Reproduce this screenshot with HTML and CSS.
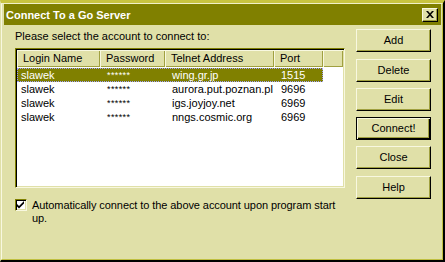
FILE: index.html
```html
<!DOCTYPE html>
<html>
<head>
<meta charset="utf-8">
<link rel="stylesheet" href="styles.css">
</head>
<body>
<div class="window">
  <div class="frame">
    <div class="titlebar">
      <span class="title">Connect To a Go Server</span>
      <span class="close"><svg width="8" height="7" viewBox="0 0 8 7"><path d="M0 0h2l2 2.2L6 0h2L5 3.5 8 7H6L4 4.8 2 7H0l3-3.5z" fill="#000"/></svg></span>
    </div>
    <div class="body">
      <div class="main">
        <div class="prompt">Please select the account to connect to:</div>
        <div class="list">
          <div class="header">
            <div class="hcell">Login Name</div>
            <div class="hcell">Password</div>
            <div class="hcell">Telnet Address</div>
            <div class="hcell">Port</div>
            <div class="hcell"></div>
          </div>
          <div class="rows">
            <div class="row selected"><span class="c1">slawek</span><span class="pw">******</span><span class="cell">wing.gr.jp</span><span class="cell">1515</span></div>
            <div class="row"><span class="c1">slawek</span><span class="pw">******</span><span class="cell">aurora.put.poznan.pl</span><span class="cell">9696</span></div>
            <div class="row"><span class="c1">slawek</span><span class="pw">******</span><span class="cell">igs.joyjoy.net</span><span class="cell">6969</span></div>
            <div class="row"><span class="c1">slawek</span><span class="pw">******</span><span class="cell">nngs.cosmic.org</span><span class="cell">6969</span></div>
          </div>
        </div>
        <div class="auto">
          <span class="checkbox"><svg width="8" height="8" viewBox="0 0 8 8"><path d="M0 3l2 2 5-5v2.5l-5 5-2-2z" fill="#000"/></svg></span>
          <span class="auto-text">Automatically connect to the above account upon program start<br>up.</span>
        </div>
      </div>
      <div class="buttons">
        <div class="btn b-add">Add</div>
        <div class="btn b-next">Delete</div>
        <div class="btn b-next">Edit</div>
        <div class="btn b-next default">Connect!</div>
        <div class="btn b-next">Close</div>
        <div class="btn b-last">Help</div>
      </div>
    </div>
  </div>
</div>
</body>
</html>
```
FILE: styles.css
```css
html, body {
  margin: 0;
  padding: 0;
  background: #e0e0a8;
}
body {
  font-family: "Liberation Sans", Arial, sans-serif;
  font-size: 11px;
  color: #000;
}
.window {
  width: 445px;
  height: 262px;
  box-sizing: border-box;
  border-style: solid;
  border-width: 3px 2px 2px 1px;
  border-color: #c8c440 #000 #000 #e0e0a8;
  background: #e0e0a8;
}
.frame {
  height: 100%;
  box-sizing: border-box;
  border: 1px solid;
  border-color: #f0f0c8 #c0c040 #c0c040 #f8f8e0;
  padding: 0 1px 0 2px;
}
.titlebar {
  height: 21px;
  background: #808000;
  display: flex;
  align-items: center;
  justify-content: space-between;
  box-sizing: border-box;
}
.title {
  color: #fff;
  font-weight: bold;
  font-size: 11px;
  padding-left: 2px;
  padding-top: 2px;
  line-height: 17px;
}
.close {
  width: 16px;
  height: 14px;
  box-sizing: border-box;
  margin-right: 3px;
  background: #e0e0a8;
  border: 1px solid;
  border-color: #f8f8e0 #000 #000 #f8f8e0;
  box-shadow: inset -1px -1px #a0a040;
  display: flex;
  align-items: center;
  justify-content: center;
}
.body {
  display: flex;
  padding-left: 11px;
}
.main {
  width: 330px;
  padding-top: 5px;
}
.prompt {
  line-height: 13px;
  height: 13px;
  margin-bottom: 5px;
}
.list {
  height: 140px;
  box-sizing: border-box;
  border: 1px solid;
  border-color: #808000 #f8f8e0 #f8f8e0 #808000;
  box-shadow: inset 1px 1px #000, inset -1px -1px #e0e0a8;
  background: #fff;
  padding: 1px;
}
.header {
  display: grid;
  grid-template-columns: 83px 65px 109px 49px 1fr;
  height: 17px;
}
.hcell {
  background: #e0e0a8;
  box-shadow: inset 1px 1px #f8f8e0, inset -1px -1px #a0a040;
  line-height: 17px;
  padding-left: 6px;
  white-space: nowrap;
  overflow: hidden;
}
.rows {
  margin-top: 1px;
}
.row {
  display: grid;
  grid-template-columns: 83px 65px 109px 49px;
  width: 306px;
  height: 14px;
  line-height: 14px;
  white-space: nowrap;
}
.row > span {
  overflow: hidden;
}
.c1 {
  padding-left: 4px;
}
.pw {
  padding-left: 7px;
  font-size: 9px;
  letter-spacing: 0.4px;
}
.cell {
  padding-left: 7px;
}
.selected {
  background: #808000;
  color: #fff;
  outline: 1px dotted #a0a0ff;
  outline-offset: -1px;
}
.auto {
  display: flex;
  margin-top: 11px;
}
.checkbox {
  width: 12px;
  height: 12px;
  box-sizing: border-box;
  flex: none;
  border: 1px solid;
  border-color: #808000 #f8f8e0 #f8f8e0 #808000;
  box-shadow: inset 1px 1px #000, inset -1px -1px #e0e0a8;
  background: #fff;
  display: flex;
  align-items: center;
  justify-content: center;
}
.auto-text {
  margin-left: 5px;
  line-height: 13px;
  letter-spacing: -0.08px;
}
.buttons {
  margin-left: 11px;
  padding-top: 4px;
  width: 75px;
  display: flex;
  flex-direction: column;
}
.btn {
  height: 23px;
  box-sizing: border-box;
  border: 1px solid;
  border-color: #f8f8e0 #000 #000 #f8f8e0;
  box-shadow: inset -1px -1px #a0a040;
  text-align: center;
  line-height: 20px;
}
.b-next {
  margin-top: 6px;
}
.b-add + .b-next {
  margin-top: 7px;
}
.b-last {
  margin-top: 7px;
}
.btn.default {
  border-color: #000;
  box-shadow: inset 1px 1px #f8f8e0, inset -1px -1px #000, inset -2px -2px #a0a040;
}
```
